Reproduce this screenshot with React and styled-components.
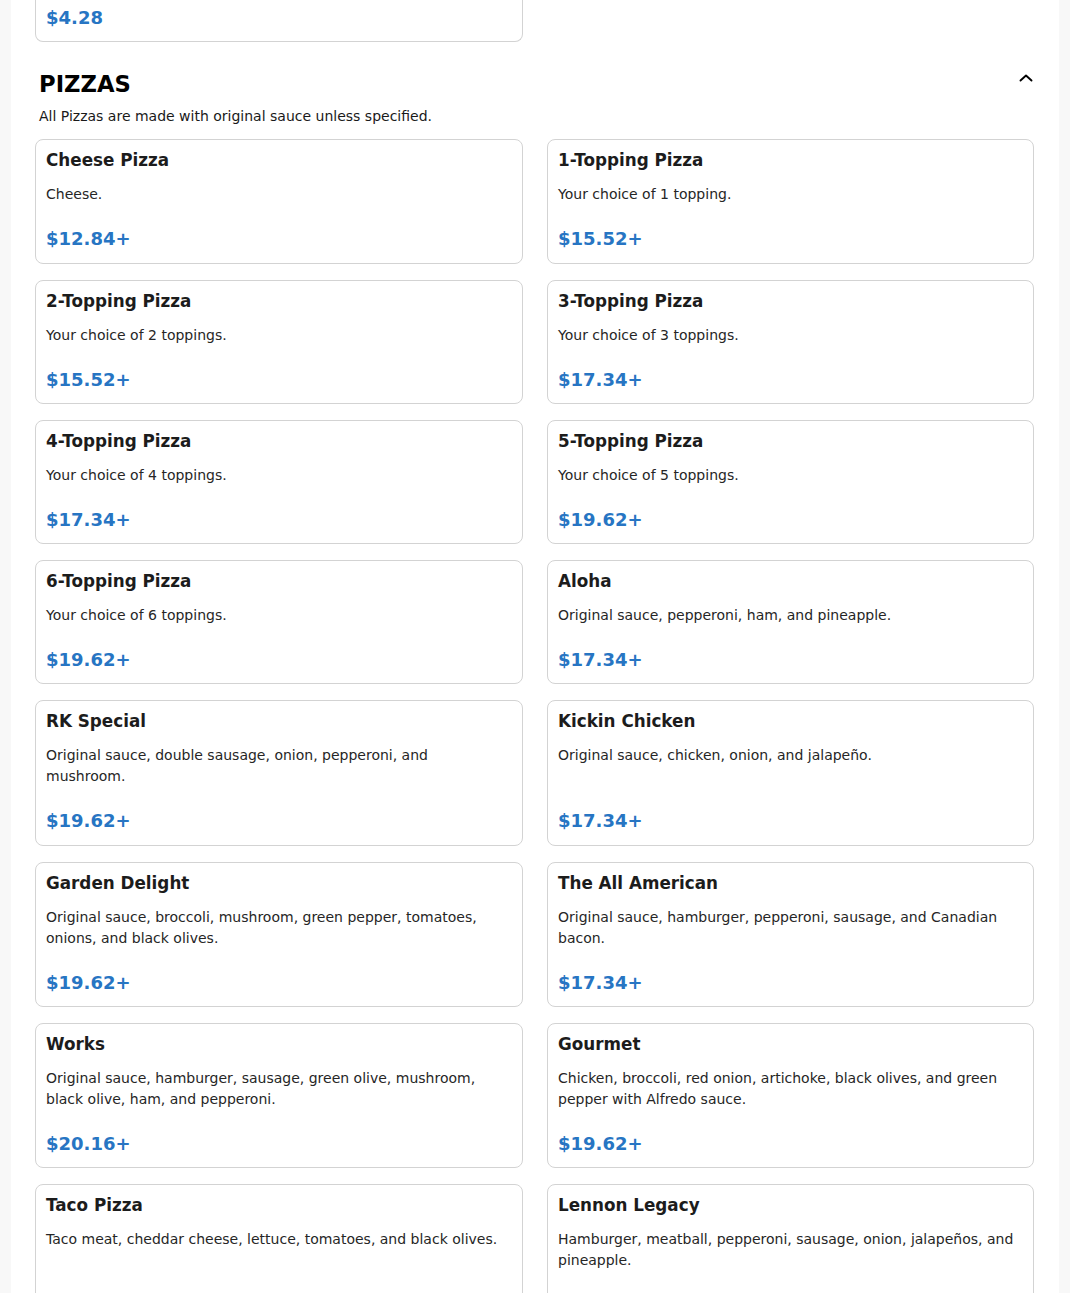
import React from 'react'
import styled, { createGlobalStyle } from 'styled-components'

const GlobalStyle = createGlobalStyle`
    html, body {
        margin: 0;
        padding: 0;
        background: #f8f8f8;
        font-family: "DejaVu Sans", "Liberation Sans", sans-serif;
    }
`;

const Page = styled.div`
    width: 1048px;
    margin-left: 11px;
    min-height: 1293px;
    background: #ffffff;
    padding: 0 25px 0 24px;
    box-sizing: border-box;
`;

const Grid = styled.div`
    display: grid;
    grid-template-columns: 488px 487px;
    column-gap: 24px;
    row-gap: 16px;
`;

const Section = styled.section`
    padding-top: 28px;
`;

const SectionHead = styled.div`
    display: flex;
    justify-content: space-between;
    align-items: flex-start;
    padding: 0 0 0 4px;
`;

const SectionTitle = styled.h2`
    margin: 0;
    font-size: 22.7px;
    line-height: 28px;
    font-weight: 700;
    color: #000;
`;

const Toggle = styled.button`
    border: none;
    background: none;
    padding: 0;
    width: 16px;
    height: 16px;
    display: flex;
    align-items: center;
    justify-content: center;
    cursor: pointer;
    color: #000;
`;

const SectionNote = styled.p`
    margin: 8px 0 12px;
    padding: 0 4px;
    font-size: 14px;
    line-height: 21px;
    color: #1a1a1a;
`;

const Card = styled.div`
    border: 1px solid #d3d3d3;
    border-radius: 8px;
    padding: 10px 18px 10.25px 10px;
    background: #fff;
    display: flex;
    flex-direction: column;
    ${({ $clipped }) => $clipped && `
        border-top: none;
        border-top-left-radius: 0;
        border-top-right-radius: 0;
        padding-top: 4px;
    `}
`;

const ItemName = styled.h3`
    margin: 0 0 14px;
    font-size: 16.8px;
    line-height: 20px;
    font-weight: 700;
    color: #1c1c1c;
`;

const ItemDesc = styled.p`
    margin: 0 0 20px;
    font-size: 14px;
    line-height: 21px;
    color: #262626;
`;

const Price = styled.span`
    margin-top: auto;
    font-size: 18px;
    line-height: 27px;
    font-weight: 700;
    color: #2775c3;
`;

const Chevron = () => (
    <svg width="16" height="16" viewBox="0 0 16 16" fill="none">
        <path d="M2.5 10.5 L8 5.5 L13.5 10.5" stroke="currentColor" strokeWidth="1.9" strokeLinecap="round" strokeLinejoin="round" />
    </svg>
)

const pizzas = [
    { name: 'Cheese Pizza', desc: 'Cheese.', price: '$12.84+' },
    { name: '1-Topping Pizza', desc: 'Your choice of 1 topping.', price: '$15.52+' },
    { name: '2-Topping Pizza', desc: 'Your choice of 2 toppings.', price: '$15.52+' },
    { name: '3-Topping Pizza', desc: 'Your choice of 3 toppings.', price: '$17.34+' },
    { name: '4-Topping Pizza', desc: 'Your choice of 4 toppings.', price: '$17.34+' },
    { name: '5-Topping Pizza', desc: 'Your choice of 5 toppings.', price: '$19.62+' },
    { name: '6-Topping Pizza', desc: 'Your choice of 6 toppings.', price: '$19.62+' },
    { name: 'Aloha', desc: 'Original sauce, pepperoni, ham, and pineapple.', price: '$17.34+' },
    { name: 'RK Special', desc: 'Original sauce, double sausage, onion, pepperoni, and mushroom.', price: '$19.62+' },
    { name: 'Kickin Chicken', desc: 'Original sauce, chicken, onion, and jalapeño.', price: '$17.34+' },
    { name: 'Garden Delight', desc: 'Original sauce, broccoli, mushroom, green pepper, tomatoes, onions, and black olives.', price: '$19.62+' },
    { name: 'The All American', desc: 'Original sauce, hamburger, pepperoni, sausage, and Canadian bacon.', price: '$17.34+' },
    { name: 'Works', desc: 'Original sauce, hamburger, sausage, green olive, mushroom, black olive, ham, and pepperoni.', price: '$20.16+' },
    { name: 'Gourmet', desc: 'Chicken, broccoli, red onion, artichoke, black olives, and green pepper with Alfredo sauce.', price: '$19.62+' },
    { name: 'Taco Pizza', desc: 'Taco meat, cheddar cheese, lettuce, tomatoes, and black olives.', price: '$19.62+' },
    { name: 'Lennon Legacy', desc: 'Hamburger, meatball, pepperoni, sausage, onion, jalapeños, and pineapple.', price: '$20.16+' },
]

const App = () => {
  return (
    <>
        <GlobalStyle />
        <Page>
            <Grid>
                <Card $clipped>
                    <Price>$4.28</Price>
                </Card>
            </Grid>
            <Section>
                <SectionHead>
                    <SectionTitle>PIZZAS</SectionTitle>
                    <Toggle aria-label="Collapse"><Chevron /></Toggle>
                </SectionHead>
                <SectionNote>All Pizzas are made with original sauce unless specified.</SectionNote>
                <Grid>
                    {pizzas.map((p) => (
                        <Card key={p.name}>
                            <ItemName>{p.name}</ItemName>
                            <ItemDesc>{p.desc}</ItemDesc>
                            <Price>{p.price}</Price>
                        </Card>
                    ))}
                </Grid>
            </Section>
        </Page>
    </>
  )
}

export default App
